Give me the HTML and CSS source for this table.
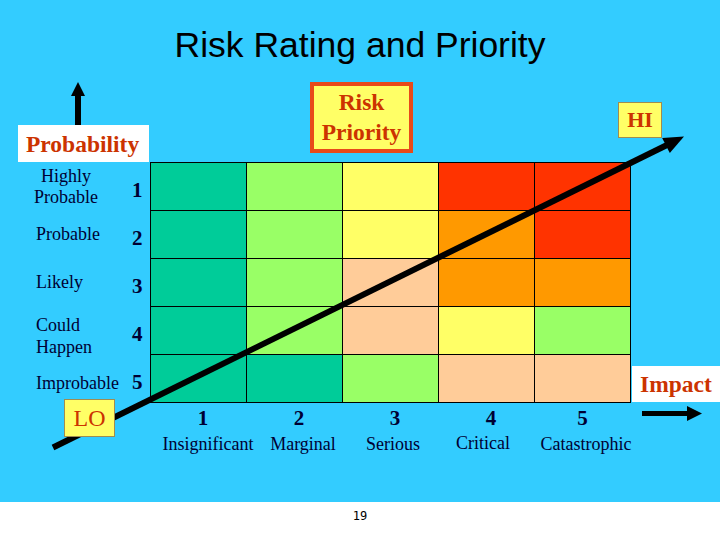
FILE: index.html
```html
<!DOCTYPE html>
<html>
<head>
<meta charset="utf-8">
<link rel="stylesheet" href="styles.css">
</head>
<body>
<div class="slide">
  <h1 class="title">Risk Rating and Priority</h1>
  <div class="chart">
    <div class="prob-head">
      <svg class="up-arrow" width="14" height="43" viewBox="0 0 14 43"><polygon points="7,0 0,14 14,14" fill="#000"/><rect x="4" y="13" width="6" height="30" fill="#000"/></svg>
      <div class="prob-box">Probability</div>
    </div>
    <div class="priority-box">Risk<br>Priority</div>

    <div class="ylabels">
      <div class="ylab center">Highly<br>Probable</div><div class="ynum">1</div>
      <div class="ylab">Probable</div><div class="ynum">2</div>
      <div class="ylab">Likely</div><div class="ynum">3</div>
      <div class="ylab low tall">Could<br>Happen</div><div class="ynum">4</div>
      <div class="ylab low">Improbable</div><div class="ynum">5</div>
    </div>

    <div class="matrix">
      <div class="c dg"></div><div class="c lg"></div><div class="c yl"></div><div class="c rd"></div><div class="c rd"></div>
      <div class="c dg"></div><div class="c lg"></div><div class="c yl"></div><div class="c or"></div><div class="c rd"></div>
      <div class="c dg"></div><div class="c lg"></div><div class="c pc"></div><div class="c or"></div><div class="c or"></div>
      <div class="c dg"></div><div class="c lg"></div><div class="c pc"></div><div class="c yl"></div><div class="c lg"></div>
      <div class="c dg"></div><div class="c dg"></div><div class="c lg"></div><div class="c pc"></div><div class="c pc"></div>
    </div>

    <div class="impact-box">Impact</div>

    <div class="xnums"><span>1</span><span>2</span><span>3</span><span>4</span><span>5</span></div>
    <svg class="right-arrow" width="60" height="15" viewBox="0 0 60 15"><rect x="0" y="5" width="46" height="5" fill="#000"/><polygon points="45,0 60,7.5 45,15" fill="#000"/></svg>

    <div class="xlabels">
      <div class="xl x1">Insignificant</div>
      <div class="xl x2">Marginal</div>
      <div class="xl x3">Serious</div>
      <div class="xl x4">Critical</div>
      <div class="xl x5">Catastrophic</div>
    </div>
  </div>

  <svg class="diag" width="720" height="502" viewBox="0 0 720 502">
    <line x1="53" y1="447.5" x2="667" y2="145" stroke="#000" stroke-width="6"/>
    <polygon points="684,136.6 662.2,137.9 669.8,153.1" fill="#000"/>
  </svg>
  <div class="tag tag-lo">LO</div>
  <div class="tag tag-hi">HI</div>
</div>
<div class="footer">19</div>
</body>
</html>
```

FILE: styles.css
```css
body {
  margin: 0;
  width: 720px;
  height: 540px;
  background: #ffffff;
  overflow: hidden;
}

.slide {
  position: relative;
  width: 720px;
  height: 502px;
  background: #33CCFF;
  font-family: "Liberation Serif", "Times New Roman", serif;
  color: #000033;
}

.title {
  margin: 0;
  padding-top: 25px;
  height: 40px;
  font: normal 35.5px/40px "Liberation Sans", Arial, sans-serif;
  text-align: center;
  color: #000000;
}

.chart {
  display: grid;
  grid-template-columns: 150px 481px 89px;
  grid-template-rows: 97px 241px 27px auto;
}

.prob-head {
  grid-column: 1;
  grid-row: 1;
  display: flex;
  flex-direction: column;
  justify-content: flex-end;
  align-items: flex-start;
}

.up-arrow {
  display: block;
  margin-left: 71px;
}

.prob-box {
  margin-left: 18px;
  width: 131px;
  height: 37px;
  box-sizing: border-box;
  padding: 6px 0 0 8px;
  background: #ffffff;
  color: #CC3300;
  font-weight: bold;
  font-size: 23.5px;
  line-height: 26px;
}

.priority-box {
  grid-column: 2;
  grid-row: 1;
  align-self: start;
  margin: 17px 0 0 160px;
  width: 103px;
  height: 71px;
  box-sizing: border-box;
  border: 4px solid #E84A1A;
  background: #FFFF66;
  color: #CC3300;
  font-weight: bold;
  font-size: 23.5px;
  line-height: 30px;
  text-align: center;
  padding-top: 1px;
}

.ylabels {
  grid-column: 1;
  grid-row: 2;
  display: grid;
  grid-template-columns: 122px 28px;
  grid-template-rows: repeat(5, 47px);
  row-gap: 1px;
  padding-top: 1px;
}

.ylab {
  display: flex;
  align-items: center;
  padding-left: 36px;
  font-size: 18px;
  line-height: 21px;
}

.ylab.center {
  text-align: center;
  padding-left: 34px;
}

.ylab.low {
  padding-top: 10px;
}

.ylab.tall {
  line-height: 22px;
}

.ynum {
  display: flex;
  align-items: center;
  padding: 8px 0 0 10px;
  font-weight: bold;
  font-size: 21px;
}

.matrix {
  grid-column: 2;
  grid-row: 2;
  display: grid;
  grid-template-columns: repeat(5, 95px);
  grid-template-rows: repeat(5, 47px);
  gap: 1px;
  padding: 1px;
  background: #000000;
}

.dg { background: #00CC99; }
.lg { background: #99FF66; }
.yl { background: #FFFF66; }
.rd { background: #FF3300; }
.or { background: #FF9900; }
.pc { background: #FFCC99; }

.impact-box {
  grid-column: 3;
  grid-row: 2;
  align-self: end;
  height: 36px;
  margin: 0 0 1px 1px;
  box-sizing: border-box;
  padding: 5px 0 0 8px;
  background: #ffffff;
  color: #CC3300;
  font-weight: bold;
  font-size: 23.5px;
  line-height: 26px;
}

.xnums {
  grid-column: 2;
  grid-row: 3;
  display: grid;
  grid-template-columns: repeat(5, 95px);
  column-gap: 1px;
  padding: 3px 1px 0;
  font-weight: bold;
  font-size: 21px;
  line-height: 24px;
  text-align: center;
}

.xnums span {
  padding-left: 9px;
}

.xnums span:last-child {
  padding-left: 0;
}

.right-arrow {
  grid-column: 3;
  grid-row: 3;
  display: block;
  margin: 3px 0 0 11px;
}

.xlabels {
  grid-column: 2;
  grid-row: 4;
  display: grid;
  grid-template-columns: repeat(5, 95px);
  column-gap: 1px;
  padding: 4px 1px 0;
  font-size: 18px;
  line-height: 21px;
}

.xl {
  display: flex;
  justify-content: center;
  white-space: nowrap;
}

.x1 { padding-left: 19px; }
.x2 { padding-left: 17px; }
.x3 { padding-left: 5px; }
.x4 { padding-right: 7px; margin-top: -1px; }
.x5 { padding-left: 7px; }

.diag {
  position: absolute;
  left: 0;
  top: 0;
  pointer-events: none;
}

.tag {
  position: absolute;
  box-sizing: border-box;
  background: #FFFF66;
  border: 1px solid #A08C50;
  color: #CC3300;
  text-align: center;
}

.tag-lo {
  left: 64px;
  top: 399px;
  width: 51px;
  height: 38px;
  font-size: 24px;
  line-height: 36px;
}

.tag-hi {
  left: 618px;
  top: 102px;
  width: 44px;
  height: 36px;
  font-weight: bold;
  font-size: 22px;
  line-height: 34px;
}

.footer {
  height: 38px;
  box-sizing: border-box;
  padding-top: 7px;
  text-align: center;
  font: 12px/14px "DejaVu Sans Mono", monospace;
  color: #000000;
}
```
